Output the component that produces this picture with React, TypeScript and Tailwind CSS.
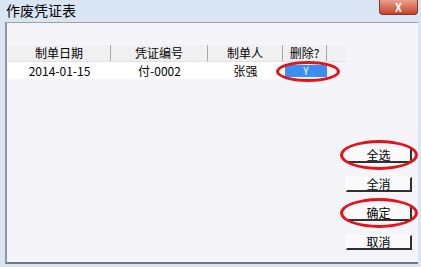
import React from 'react';

const font = { fontFamily: '"Noto Sans CJK SC", "Liberation Sans", sans-serif' };

const cols = [
  { title: '制单日期', w: 'w-[103px]' },
  { title: '凭证编号', w: 'w-[97px]' },
  { title: '制单人', w: 'w-[75px]' },
  { title: '删除?', w: 'w-[44px]' },
];

const rows = [{ date: '2014-01-15', no: '付-0002', maker: '张强', del: 'Y' }];

function Btn({ label, ring }: { label: string; ring?: boolean }) {
  return (
    <div className="relative">
      <button className="w-[66px] h-[15px] bg-[#fafafa] border-t border-l border-[#ffffff] border-r-2 border-b-2 border-r-[#303030] border-b-[#303030] text-[12px] leading-[12px] text-black flex items-center justify-center">
        {label}
      </button>
      {ring && (
        <div className="absolute left-[-6px] top-[-8px] w-[78px] h-[30px] rounded-[50%] border-[3px] border-[#e3121b] pointer-events-none" />
      )}
    </div>
  );
}

export default function App() {
  return (
    <div className="w-[421px] h-[267px] bg-[#d9e5f2] flex flex-col overflow-hidden" style={font}>
      {/* 标题栏 */}
      <div className="h-[22px] flex items-start justify-between pl-[6px]">
        <span className="text-[14px] leading-[20px] text-black">作废凭证表</span>
        <div className="w-[39px] h-[15px] mr-[3px] rounded-b-[4px] bg-gradient-to-b from-[#e8a18e] to-[#c4402a] border border-[#8a3324] border-t-0 flex items-center justify-center text-white text-[11px] font-bold leading-[13px]">
          X
        </div>
      </div>

      {/* 主面板 */}
      <div className="flex-1 ml-[5px] mr-[3px] mb-[3px] bg-[#f5f4f8] border-t border-[#9aa3ad] border-l-2 border-l-[#8d97a3] border-b-2 border-b-[#6f7780] flex">
        <div className="flex-1 pt-[22px] pl-[1px]">
          <div className="flex h-[17px] bg-[#f0f0f0] border-b border-[#e2e2e2]">
            {cols.map((c) => (
              <div key={c.title} className={`${c.w} border-r border-[#a8a8a8] text-[12px] leading-[16px] text-center text-black`}>
                {c.title}
              </div>
            ))}
          </div>
          {rows.map((r) => (
            <div key={r.no} className="flex h-[17px] relative">
              <div className="w-[103px] bg-white text-[12px] leading-[17px] text-center">{r.date}</div>
              <div className="w-[97px] bg-white text-[12px] leading-[17px] text-center">{r.no}</div>
              <div className="w-[75px] bg-white text-[12px] leading-[17px] text-center">{r.maker}</div>
              <div className="w-[44px] pl-[2px] pt-[3px]">
                <div className="h-[12px] bg-[#3b8ff0] text-white text-[10px] leading-[12px] text-center">{r.del}</div>
              </div>
              <div className="absolute left-[268px] top-[-1px] w-[64px] h-[21px] rounded-[50%] border-[3px] border-[#e3121b] pointer-events-none" />
            </div>
          ))}
        </div>

        <div className="w-[72px] pt-[125px] flex flex-col gap-[14px]">
          <Btn label="全选" ring />
          <Btn label="全消" />
          <Btn label="确定" ring />
          <Btn label="取消" />
        </div>
      </div>
    </div>
  );
}
